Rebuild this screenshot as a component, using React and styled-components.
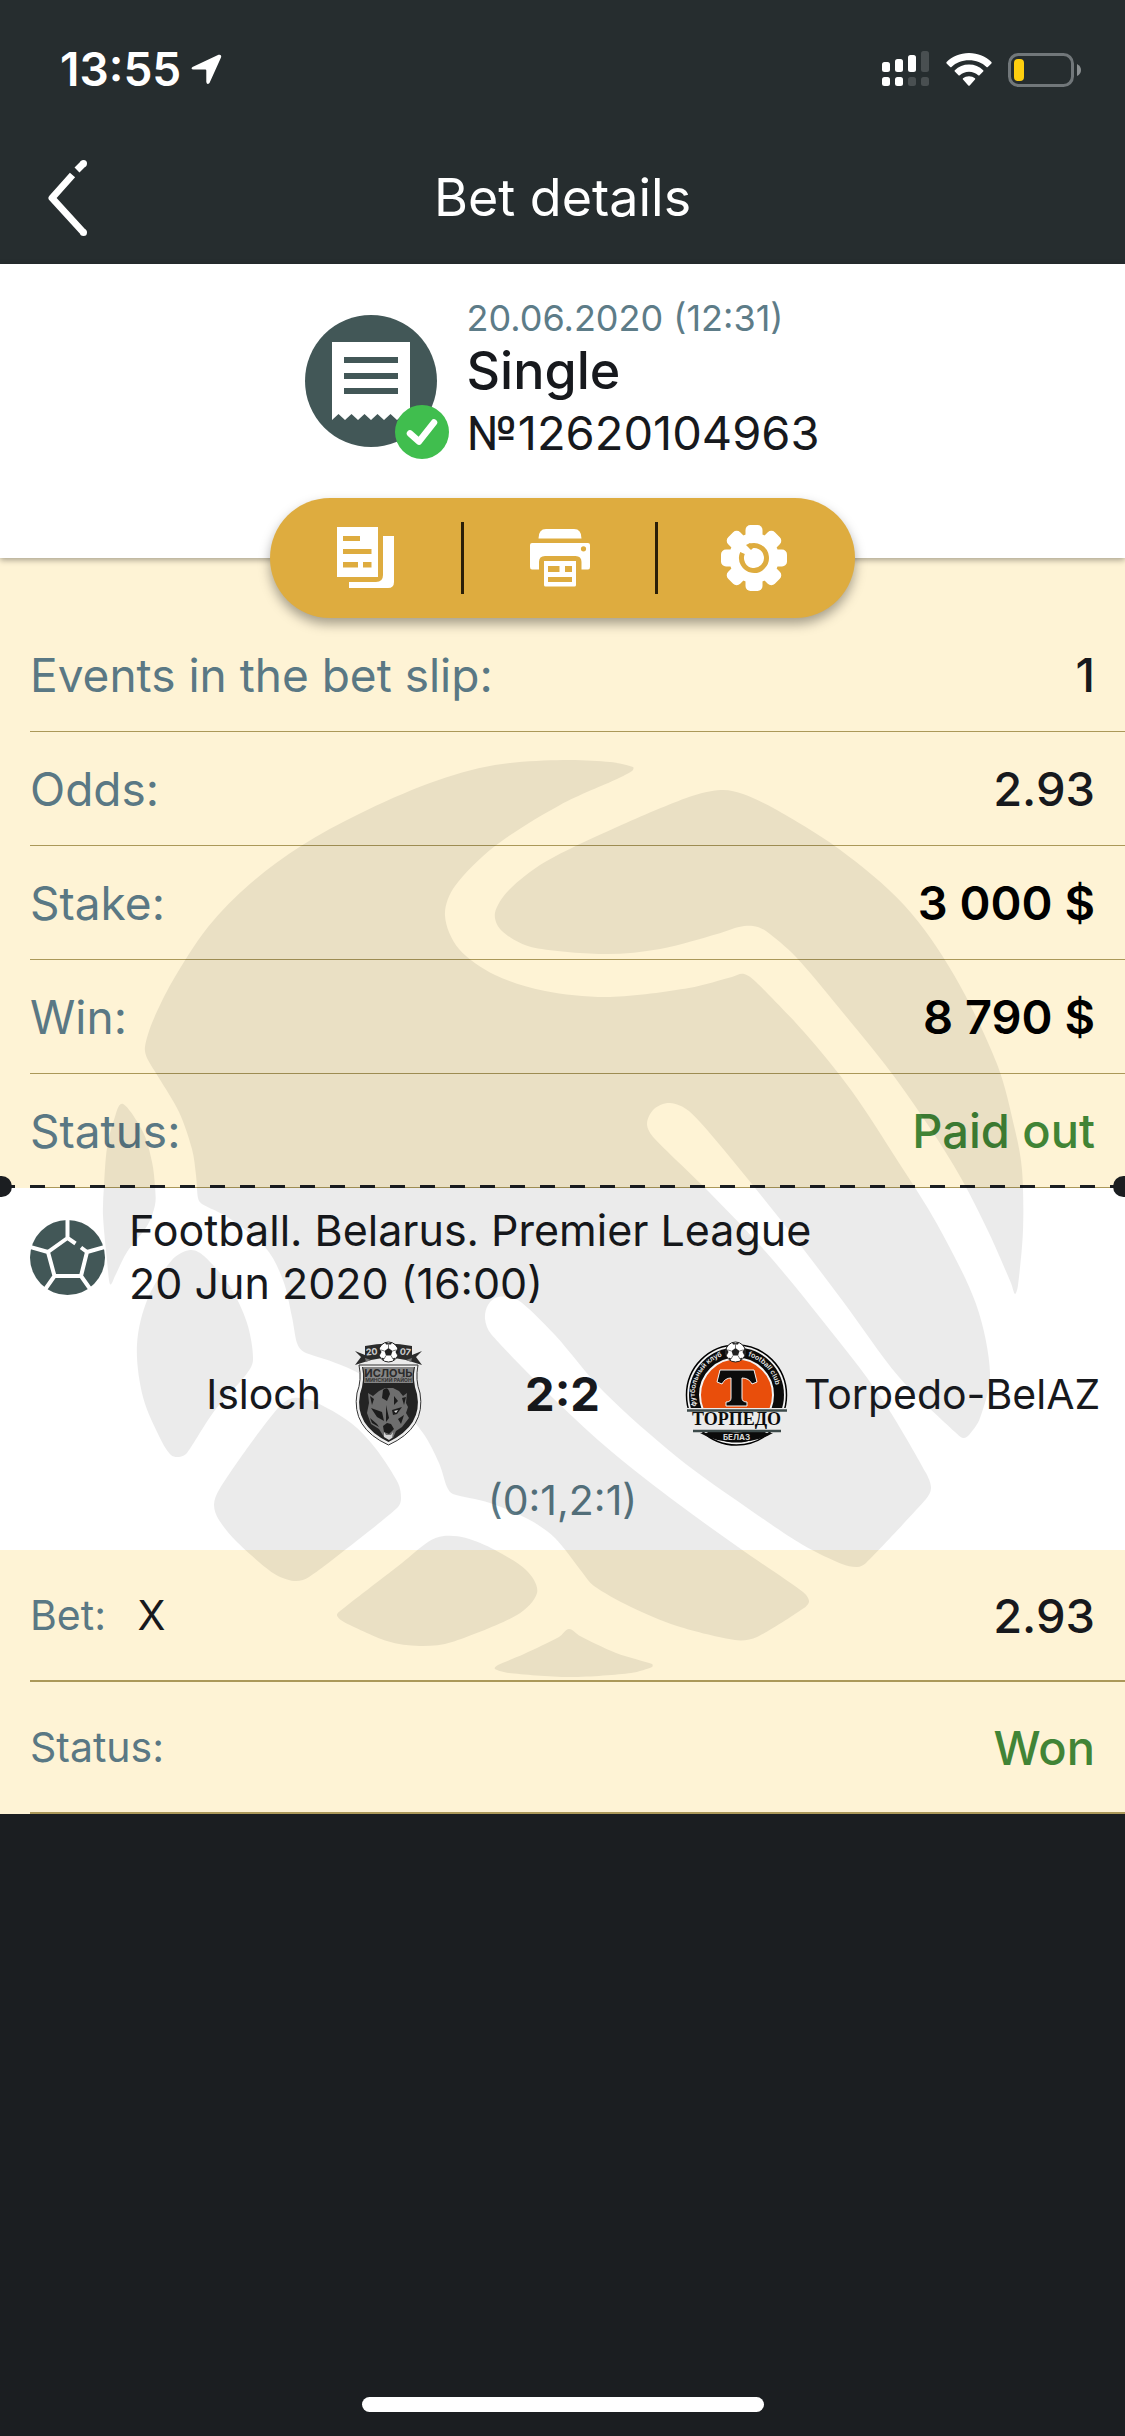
import React from 'react'
import styled, { createGlobalStyle } from 'styled-components'

const GlobalStyle = createGlobalStyle`
  * {
    box-sizing: border-box;
  }
  body {
    margin: 0;
    background: #1b1e21;
    color: #17191d;
    font-family: Inter, "Liberation Sans", sans-serif;
  }
`

// closed curve that runs through every point of the list
const smooth = (points) => {
  const n = points.length
  const at = (i) => points[(i + n) % n]
  let d = `M${points[0].join(' ')}`
  for (let i = 0; i < n; i++) {
    const [p0, p1, p2, p3] = [at(i - 1), at(i), at(i + 1), at(i + 2)]
    // handles never get longer than a third of their own segment
    const len = Math.hypot(p2[0] - p1[0], p2[1] - p1[1]) / 3
    const handle = (a, b) => {
      const x = (b[0] - a[0]) / 6
      const y = (b[1] - a[1]) / 6
      const k = Math.min(1, len / (Math.hypot(x, y) || 1))
      return [x * k, y * k]
    }
    const h1 = handle(p0, p2)
    const h2 = handle(p1, p3)
    d += `C${p1[0] + h1[0]} ${p1[1] + h1[1]} ${p2[0] - h2[0]} ${p2[1] - h2[1]} ${p2.join(' ')}`
  }
  return d + 'Z'
}

const ballPatches = [
  [
    [633, 767], [610, 762], [563, 760], [495, 765], [430, 783], [359, 814], [301, 846], [251, 883], [208, 927], [172, 982],
    [152, 1023], [145, 1047], [147, 1058], [159, 1078], [179, 1112], [192, 1149], [196, 1175], [198, 1198], [202, 1204],
    [229, 1218], [265, 1247], [283, 1280], [292, 1317], [297, 1343], [304, 1352], [333, 1362], [362, 1375], [394, 1400],
    [423, 1433], [439, 1463], [447, 1487], [453, 1494], [490, 1503], [528, 1519], [555, 1538], [582, 1572], [594, 1586],
    [631, 1607], [677, 1626], [735, 1640], [757, 1637], [804, 1608], [809, 1601], [803, 1592], [738, 1547], [677, 1503],
    [612, 1452], [555, 1400], [491, 1334], [485, 1319], [488, 1305], [498, 1297], [518, 1300], [555, 1335], [604, 1392],
    [677, 1457], [746, 1507], [803, 1545], [842, 1564], [857, 1567], [866, 1563], [926, 1499], [931, 1488], [926, 1473],
    [880, 1396], [822, 1320], [765, 1251], [708, 1191], [654, 1138], [647, 1124], [654, 1109], [670, 1103], [689, 1111],
    [719, 1144], [784, 1224], [842, 1300], [899, 1377], [955, 1432], [963, 1438], [969, 1435], [980, 1418], [990, 1373],
    [976, 1304], [937, 1224], [899, 1163], [851, 1090], [804, 1032], [756, 982], [744, 974], [732, 977], [689, 988],
    [610, 997], [545, 991], [495, 975], [459, 949], [445, 916], [455, 886], [495, 846], [560, 805], [617, 779], [632, 771]
  ],
  [
    [721, 790], [689, 797], [617, 827], [545, 862], [509, 890], [495, 913], [502, 931], [531, 947], [603, 954], [660, 949],
    [717, 934], [739, 927], [753, 926], [766, 931], [796, 957], [840, 1009], [890, 1071], [930, 1128], [961, 1178],
    [989, 1233], [1011, 1283], [1015, 1294], [1018, 1285], [1023, 1230], [1022, 1170], [1015, 1130], [997, 1064],
    [954, 975], [904, 905], [839, 849], [775, 809], [743, 794]
  ],
  [
    [123, 1104], [114, 1120], [107, 1148], [104, 1186], [103, 1215], [107, 1260], [110, 1284], [115, 1276], [127, 1252],
    [147, 1226], [155, 1205], [155, 1187], [152, 1162], [143, 1132]
  ],
  [
    [190, 1250], [172, 1260], [148, 1298], [137, 1345], [143, 1397], [161, 1440], [171, 1455], [179, 1457], [187, 1453],
    [215, 1410], [245, 1376], [253, 1360], [247, 1323], [229, 1285], [204, 1256]
  ],
  [
    [294, 1398], [280, 1406], [251, 1443], [219, 1490], [214, 1505], [219, 1520], [237, 1542], [273, 1573], [294, 1581],
    [309, 1577], [359, 1539], [398, 1507], [401, 1498], [398, 1483], [376, 1449], [351, 1423], [315, 1402]
  ],
  [
    [444, 1536], [428, 1542], [402, 1563], [344, 1608], [337, 1615], [344, 1622], [387, 1641], [420, 1646], [452, 1642],
    [517, 1615], [537, 1593], [527, 1571], [495, 1550], [466, 1538]
  ],
  [
    [569, 1629], [559, 1637], [524, 1654], [498, 1665], [495, 1669], [509, 1673], [570, 1677], [631, 1673], [652, 1667],
    [652, 1664], [616, 1653], [580, 1636]
  ]
]

const slipRows = [
  { label: 'Events in the bet slip:', value: '1' },
  { label: 'Odds:', value: '2.93' },
  { label: 'Stake:', value: '3 000 $', tone: 'money' },
  { label: 'Win:', value: '8 790 $', tone: 'money' },
  { label: 'Status:', value: 'Paid out', tone: 'good' }
]

const tones = {
  plain: { color: '#17191d', weight: 500 },
  money: { color: '#000', weight: 600 },
  good: { color: '#418436', weight: 500 }
}

function SignalIcon() {
  return (
    <svg width="48" height="36" viewBox="0 0 48 36" fill="#fff" aria-hidden="true">
      <rect x="0" y="11" width="8" height="10" rx="2.500" />
      <rect x="13" y="8" width="8" height="13" rx="2.500" />
      <rect x="26" y="4" width="8" height="17" rx="2.500" />
      <rect x="39" y="0" width="8" height="21" rx="2.500" fill="#494f51" />
      <rect x="0" y="26" width="8" height="9" rx="2.500" />
      <rect x="13" y="26" width="8" height="9" rx="2.500" />
      <rect x="26" y="26" width="8" height="9" rx="2.500" fill="#494f51" />
      <rect x="39" y="26" width="8" height="9" rx="2.500" fill="#494f51" />
    </svg>
  )
}

function WifiIcon() {
  return (
    <svg width="46" height="36" viewBox="0 0 46 36" fill="#fff" aria-hidden="true">
      <path d="M23 2C14 2 6 5.500 .6 11Q0 11.700 .6 12.400L4.200 16Q4.900 16.500 5.500 16C10 11.700 16 9.300 23 9.300S36 11.700 40.500 16Q41.100 16.500 41.800 16L45.400 12.400Q46 11.700 45.400 11C40 5.500 32 2 23 2Z" />
      <path d="M23 13.600C17.500 13.600 12.500 15.600 8.800 19.200Q8.200 19.900 8.800 20.500L12.500 24.200Q13.100 24.700 13.800 24.200C16.300 22 19.500 20.800 23 20.800S29.700 22 32.200 24.200Q32.900 24.700 33.500 24.200L37.200 20.500Q37.800 19.900 37.200 19.200C33.500 15.600 28.500 13.600 23 13.600Z" />
      <path d="M23 25.200C20.700 25.200 18.600 26 17 27.300Q16.400 28 17 28.600L22.300 34.500Q23 35.200 23.700 34.500L29 28.600Q29.600 28 29 27.300C27.400 26 25.300 25.200 23 25.200Z" />
    </svg>
  )
}

function BatteryIcon() {
  return (
    <svg width="74" height="36" viewBox="0 0 74 36" aria-hidden="true">
      <rect x="1.500" y="3.500" width="63" height="31" rx="9" fill="none" stroke="#71777a" strokeWidth="3" />
      <rect x="6" y="8" width="10" height="22" rx="4" fill="#ffcf0f" />
      <path d="M69 13Q73 15 73 19T69 25Z" fill="#8a8f91" />
    </svg>
  )
}

function TicketIcon() {
  return (
    <svg width="145" height="149" viewBox="0 0 145 149" aria-hidden="true">
      <circle cx="66" cy="66" r="66" fill="#425757" />
      <path d="M27 27H105V105L98.500 99L92 105L85.500 99L79 105L72.500 99L66 105L59.500 99L53 105L46.500 99L40 105L33.500 99L27 105Z" fill="#fff" />
      <path d="M39 45H93M39 61H93M39 76H93" stroke="#425757" strokeWidth="6" />
      <circle cx="117" cy="117" r="27" fill="#40be4e" />
      <path d="M105 118.500L114 126.500L129 107.500" fill="none" stroke="#fff" strokeWidth="6.500" strokeLinecap="round" strokeLinejoin="round" />
    </svg>
  )
}

function CopyIcon() {
  return (
    <svg width="58" height="62" viewBox="0 0 58 62" fill="#fff" aria-hidden="true">
      <path fillRule="evenodd" d="M0 0H41V50H0ZM6 9V14H23V9ZM6 22V27H34.500V22ZM6 35V40.500H21V35ZM26 35V40.500H34.500V35Z" />
      <path d="M46 9H57V55Q57 61 51 61H12V55H39Q46 55 46 48Z" />
    </svg>
  )
}

function PrinterIcon() {
  return (
    <svg width="60" height="58" viewBox="0 0 60 58" fill="#fff" aria-hidden="true">
      <path d="M8.500 9.500Q8.500 0 16 0H44Q51.500 0 51.500 9.500Z" />
      <path fillRule="evenodd" d="M2 14H58Q60 14 60 16V38Q60 40.500 58 40.500H51.500V33Q51.500 27 45.500 27H15Q9 27 9 33V40.500H2Q0 40.500 0 38V16Q0 14 2 14ZM53.500 17.200A2.600 2.600 0 1 0 53.500 22.400A2.600 2.600 0 1 0 53.500 17.200Z" />
      <path fillRule="evenodd" d="M14 32H46V56Q46 57.500 44.500 57.500H15.500Q14 57.500 14 56ZM18 37V43H29.500V37ZM35 37V43H42V37ZM18 48V53H42V48Z" />
    </svg>
  )
}

function GearIcon() {
  return (
    <svg width="66" height="66" viewBox="-33 -33 66 66" fill="#fff" aria-hidden="true">
      {[0, 45, 90, 135].map((angle) => (
        <rect key={angle} x="-8.500" y="-33" width="17" height="66" rx="5" transform={`rotate(${angle})`} />
      ))}
      <circle r="25" />
      <path d="M-5 -11.500A12.500 12.500 0 1 1 -11.500 -5" fill="none" stroke="#deac3f" strokeWidth="5" />
      <path d="M-8 -13L-3 -8L0 -11L-4 -15Z" fill="#deac3f" />
    </svg>
  )
}

function FootballIcon() {
  return (
    <svg width="75" height="75" viewBox="0 0 75 75" aria-hidden="true">
      <circle cx="37.500" cy="37.500" r="37.500" fill="#425757" />
      <path
        d="M37.500 0V18L45.500 23.500M51 27.500L57 32L51 56H24.500L18 32L37.500 18M57 32L75 27M51 56L60.500 69.500M24.500 56L15 69.500M18 32L0 27"
        fill="none"
        stroke="#fff"
        strokeWidth="4"
      />
    </svg>
  )
}

function SmallBall({ cx, cy }) {
  return (
    <g transform={`translate(${cx} ${cy})`}>
      <circle r="10" fill="#fff" stroke="#222" strokeWidth="1" />
      <path d="M0 -4L4 -1L2.500 3.500H-2.500L-4 -1Z" fill="#222" />
      <path d="M-3.500 -9.500Q0 -8 3.500 -9.500L2.500 -7.500H-2.500ZM9 -4L7 0L9 4L9.800 0ZM-9 -4L-7 0L-9 4L-9.800 0ZM4 6.500L7 5.500L5.500 8.500ZM-4 6.500L-7 5.500L-5.500 8.500Z" fill="#222" />
      <path d="M0 -4V-8M4 -1L7.500 -2M-4 -1L-7.500 -2M2.500 3.500L4.500 7M-2.500 3.500L-4.500 7" stroke="#777" strokeWidth="1" />
    </g>
  )
}

function IslochEmblem() {
  return (
    <svg width="105" height="105" viewBox="0 0 105 105" role="img" aria-label="Isloch">
      <path d="M19 10L29 14V5Q52 0 76 5V14L86 10L80 16L86 24L70 19Q52 15 35 19L19 24L25 16Z" fill="#2b2b2b" />
      <path d="M35 19L30 21L29 17ZM70 19L75 21L76 17Z" fill="#777" />
      <text x="36" y="14" fontSize="9" fontWeight="700" textAnchor="middle" fill="#ccc" transform="rotate(-6 36 14)">20</text>
      <text x="69" y="14" fontSize="9" fontWeight="700" textAnchor="middle" fill="#ccc" transform="rotate(6 69 14)">07</text>
      <SmallBall cx={52.5} cy={11} />
      <path d="M23 24H82Q79 39 84 52Q90 87 52.500 104Q15 87 21 52Q26 39 23 24Z" fill="#eee" stroke="#333" strokeWidth="1" />
      <path d="M26 26H79Q76 39 81 53Q87 84 52.500 101Q18 84 24 53Q29 39 26 26Z" fill="#232323" />
      <path d="M27 26H78Q76 33 77 42H28Q29 33 27 26Z" fill="#858585" />
      <text x="52.500" y="36" fontSize="11" fontWeight="700" textAnchor="middle" fill="#2b2b2b">ИСЛОЧЬ</text>
      <text x="52.500" y="41" fontSize="5" fontWeight="700" textAnchor="middle" fill="#333">МИНСКИЙ РАЙОН</text>
      <path d="M32 52L37 55L43 50L49 47L57 47L63 50L67 55L71 52L70 62L72 66L70 72L73 77L66 86L60 90L57 97L48 96L43 88L35 83L31 72L33 62Z" fill="#6e6e6e" />
      <path d="M34 55L38 58L36 64ZM47 49Q52 44 54 53L51 60L46 57ZM35 67L46 71L48 80L41 76ZM66 57L70 56L68 64ZM56 69L66 66L61 73L57 74ZM47 85L51 82L55 83L58 88L53 93L48 91ZM34 77L41 83L43 86L36 82ZM62 78L68 74L65 83ZM50 64L53 77L50 81ZM58 55L62 60L58 64Z" fill="#1c1c1c" />
      <path d="M48 91L50 94L55 94L57 91L56 97L53 99L48 96ZM58 70L62 69L60 72Z" fill="#d5d5d5" />
    </svg>
  )
}

function TorpedoEmblem() {
  return (
    <svg width="105" height="105" viewBox="0 0 105 105" role="img" aria-label="Torpedo-BelAZ">
      <defs>
        <path id="ringLeft" d="M12.500 65A40.500 40.500 0 0 1 50 13" />
        <path id="ringRight" d="M64 15A40.500 40.500 0 0 1 90 69" />
        <clipPath id="ringCut">
          <path d="M0 0H105V67H0ZM0 91H105V105H0Z" />
        </clipPath>
      </defs>
      <g clipPath="url(#ringCut)">
        <circle cx="52.500" cy="54" r="50" fill="#f4f4f4" stroke="#000" strokeWidth="1.500" />
        <circle cx="52.500" cy="54" r="47.500" fill="#0b0b0b" />
        <circle cx="52.500" cy="54" r="36.500" fill="#e94e0b" stroke="#f4f4f4" strokeWidth="2" />
        <path d="M10 91H95V105H10Z" fill="none" />
      </g>
      <path d="M16 92H89Q74 101 52.500 101T16 92Z" fill="#0b0b0b" />
      <text fontSize="7" fontWeight="600" fill="#e8e8e8">
        <textPath href="#ringLeft">футбольный клуб</textPath>
      </text>
      <text fontSize="7" fontWeight="600" fill="#e8e8e8">
        <textPath href="#ringRight">football club</textPath>
      </text>
      <path
        d="M36 29H70L73 41L68 43Q65 37 58 37V57Q58 61 63 61V65H42V61Q47 61 47 57V37Q41 37 38 43L33 41Z"
        fill="#0b0b0b"
        stroke="#f4f4f4"
        strokeWidth="1"
      />
      <path d="M3 69.500H103M9 90H97" stroke="#3c4a4a" strokeWidth="2.500" />
      <text x="52.500" y="84" fontFamily="Liberation Serif, serif" fontSize="18" fontWeight="700" textAnchor="middle" fill="#0b0b0b">
        ТОРПЕДО
      </text>
      <text x="52.500" y="99" fontSize="8" fontWeight="700" textAnchor="middle" fill="#d8d8d8">БЕЛАЗ</text>
      <SmallBall cx={51.5} cy={11} />
    </svg>
  )
}

function App() {
  return (
    <>
      <GlobalStyle />
      <Screen>
        <Header>
          <StatusBar>
            <Clock>
              <time>13:55</time>
              <svg width="31" height="31" viewBox="0 0 31 31" fill="#fff" aria-hidden="true">
                <path d="M1.500 13L27.500 .8Q31 0 30 3.500L18.500 29Q16 31.500 15.300 28V16.500Q15.300 15.500 14.300 15.500H2.500Q-.8 15 1.500 13Z" />
              </svg>
            </Clock>
            <Indicators>
              <SignalIcon />
              <WifiIcon />
              <BatteryIcon />
            </Indicators>
          </StatusBar>
          <NavBar>
            <BackButton type="button" aria-label="Back">
              <svg width="42" height="76" viewBox="0 0 42 76" fill="none" stroke="#fff" strokeWidth="7" strokeLinejoin="round" aria-hidden="true">
                <path d="M31 10L37.500 3.500M26.500 15L6 38L37.500 72.500" />
                <circle cx="37.500" cy="3.500" r="3.500" fill="#fff" stroke="none" />
                <circle cx="37.500" cy="72.500" r="3.500" fill="#fff" stroke="none" />
              </svg>
            </BackButton>
            <Title>Bet details</Title>
          </NavBar>
        </Header>

        <main>
          <Hero>
            <Summary>
              <TicketIcon />
              <div>
                <BetDate>20.06.2020 (12:31)</BetDate>
                <BetType>Single</BetType>
                <BetNumber>№12620104963</BetNumber>
              </div>
            </Summary>
            <Toolbar>
              <ToolButton type="button" aria-label="Copy bet slip">
                <CopyIcon />
              </ToolButton>
              <ToolButton type="button" aria-label="Print">
                <PrinterIcon />
              </ToolButton>
              <ToolButton type="button" aria-label="Settings">
                <GearIcon />
              </ToolButton>
            </Toolbar>
          </Hero>

          <Slip>
            <SlipList>
              {slipRows.map(({ label, value, tone }) => (
                <SlipRow key={label}>
                  <dt>{label}</dt>
                  <Value $tone={tone}>{value}</Value>
                </SlipRow>
              ))}
            </SlipList>
            <TearLine />
            <Match>
              <League>
                <FootballIcon />
                <div>
                  Football. Belarus. Premier League
                  <br />
                  20 Jun 2020 (16:00)
                </div>
              </League>
              <Teams>
                <Team $side="home">
                  Isloch
                  <IslochEmblem />
                </Team>
                <Score>2:2</Score>
                <Team>
                  <TorpedoEmblem />
                  Torpedo-BelAZ
                </Team>
              </Teams>
              <Halves>(0:1,2:1)</Halves>
            </Match>
            <dl>
              <BetRow>
                <dt>
                  Bet: <Pick>X</Pick>
                </dt>
                <Value>2.93</Value>
              </BetRow>
              <BetRow>
                <dt>Status:</dt>
                <Value $tone="good">Won</Value>
              </BetRow>
            </dl>
            <Watermark viewBox="0 558 1125 1256" aria-hidden="true">
              {ballPatches.map((points, i) => (
                <path key={i} d={smooth(points)} />
              ))}
            </Watermark>
          </Slip>
        </main>
        <HomeIndicator />
      </Screen>
    </>
  )
}

export default App

const Screen = styled.div`
  display: flex;
  flex-direction: column;
  min-height: 100vh;
  svg {
    display: block;
    flex-shrink: 0;
  }
`

const Header = styled.header`
  padding-bottom: 6px;
  background: #262d2f;
  color: #fff;
`

const StatusBar = styled.div`
  display: flex;
  align-items: center;
  justify-content: space-between;
  height: 138px;
  padding: 0 43px 0 60px;
`

const Clock = styled.div`
  display: flex;
  align-items: center;
  gap: 10px;
  font-size: 46px;
  font-weight: 600;
`

const Indicators = styled.div`
  display: flex;
  align-items: center;
  gap: 16px;
`

const NavBar = styled.div`
  display: grid;
  grid-template-columns: 88px 1fr 88px;
  align-items: center;
  height: 120px;
`

const BackButton = styled.button`
  display: flex;
  justify-content: flex-end;
  padding: 0;
  border: 0;
  background: none;
`

const Title = styled.h1`
  margin: 0;
  font-size: 52px;
  font-weight: 400;
  line-height: 60px;
  text-align: center;
`

const Hero = styled.section`
  position: relative;
  z-index: 2;
  display: flex;
  flex-direction: column;
  align-items: center;
  padding-top: 32px;
  background: #fff;
  box-shadow: 0 2px 6px rgba(0, 0, 0, 0.35);
`

const Summary = styled.div`
  display: flex;
  align-items: flex-end;
  gap: 16px;
`

const BetDate = styled.div`
  color: #5d7c88;
  font-size: 36px;
  line-height: 44px;
`

const BetType = styled.div`
  font-size: 52px;
  font-weight: 500;
  line-height: 62px;
`

const BetNumber = styled.div`
  font-size: 47px;
  line-height: 62px;
`

const Toolbar = styled.div`
  display: flex;
  width: 52%;
  height: 120px;
  margin: 34px 0 -60px;
  padding: 24px 6px 24px 0;
  border-radius: 60px;
  background: #deac3f;
  box-shadow: 0 6px 12px rgba(0, 0, 0, 0.35);
`

const ToolButton = styled.button`
  display: flex;
  flex: 1;
  align-items: center;
  justify-content: center;
  padding: 0;
  border: 0;
  background: none;
  & + & {
    border-left: 3px solid #2b1f08;
  }
`

const Slip = styled.section`
  position: relative;
  padding-top: 60px;
  background: #fef3d5;
  dl,
  dd {
    margin: 0;
  }
`

const SlipList = styled.dl`
  color: #5a7884;
  font-size: 46px;
`

const SlipRow = styled.div`
  display: flex;
  align-items: center;
  justify-content: space-between;
  height: 114px;
  margin-left: 30px;
  padding-right: 30px;
  border-bottom: 1px solid #ab9859;
`

const BetRow = styled(SlipRow)`
  height: 132px;
  border-bottom-width: 2px;
  color: #5a7884;
  font-size: 41px;
`

const Value = styled.dd`
  color: ${({ $tone = 'plain' }) => tones[$tone].color};
  font-size: 47px;
  font-weight: ${({ $tone = 'plain' }) => tones[$tone].weight};
`

const Pick = styled.span`
  margin-left: 20px;
  color: #17191d;
`

const TearLine = styled.div`
  position: relative;
  height: 3px;
  margin-top: -3px;
  background: repeating-linear-gradient(90deg, #1b1e21 0 15px, transparent 15px 30px);
  overflow-x: clip;
  &::before,
  &::after {
    content: "";
    position: absolute;
    top: -9px;
    left: -9px;
    width: 21px;
    height: 21px;
    border-radius: 50%;
    background: #1b1e21;
  }
  &::after {
    left: auto;
    right: -9px;
  }
`

const Match = styled.div`
  padding: 16px 0 23px;
  background: #fff;
`

const League = styled.div`
  display: flex;
  align-items: center;
  gap: 24px;
  padding: 0 30px;
  font-size: 43px;
  line-height: 53px;
`

const Teams = styled.div`
  display: grid;
  grid-template-columns: 1fr 243px 1fr;
  align-items: center;
  margin-top: 31px;
`

// sits above the watermark so the emblems keep their own colours
const Team = styled.div`
  position: relative;
  z-index: 1;
  display: flex;
  align-items: center;
  justify-content: ${({ $side }) => ($side === 'home' ? 'flex-end' : 'flex-start')};
  gap: 15px;
  font-size: 41px;
  white-space: nowrap;
`

const Score = styled.div`
  font-size: 47px;
  font-weight: 700;
  text-align: center;
`

const Halves = styled.div`
  margin-top: 27px;
  color: #5a7884;
  font-size: 41px;
  line-height: 54px;
  text-align: center;
`

const Watermark = styled.svg`
  position: absolute;
  top: 0;
  left: 0;
  width: 100%;
  height: 100%;
  fill: #000;
  opacity: 0.075;
  pointer-events: none;
`

const HomeIndicator = styled.div`
  align-self: center;
  width: 402px;
  height: 15px;
  margin: auto 0 24px;
  border-radius: 8px;
  background: #fff;
`
